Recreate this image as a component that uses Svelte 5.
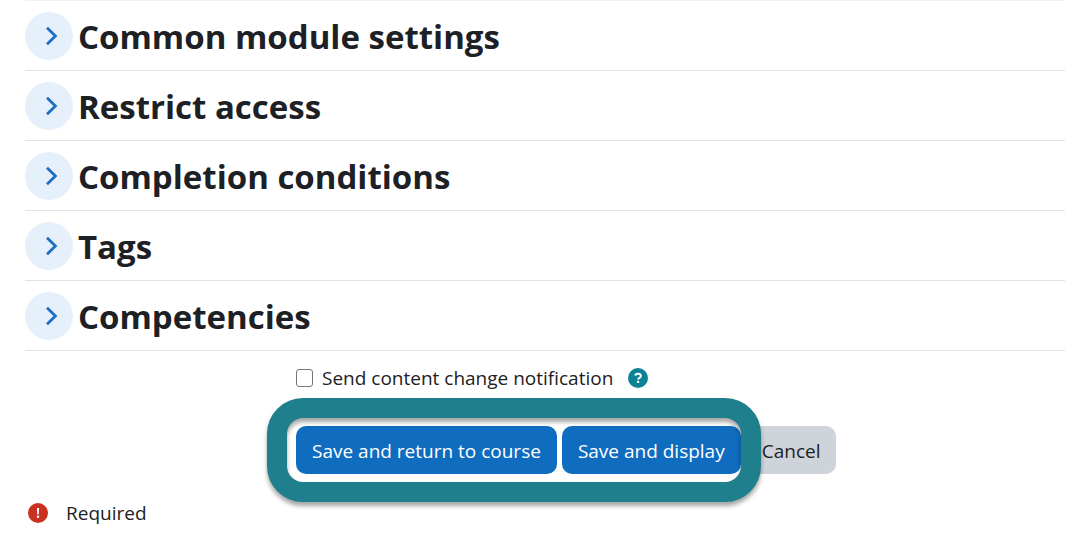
<script lang="ts">
  interface Section {
    id: string;
    title: string;
  }

  const sections: Section[] = [
    { id: 'common', title: 'Common module settings' },
    { id: 'restrict', title: 'Restrict access' },
    { id: 'completion', title: 'Completion conditions' },
    { id: 'tags', title: 'Tags' },
    { id: 'competencies', title: 'Competencies' },
  ];

  let notify = $state(false);
</script>

<form class="settings" onsubmit={(e) => e.preventDefault()}>
  <div class="sections">
    {#each sections as section (section.id)}
      <div class="section">
        <button type="button" class="toggle" aria-expanded="false" aria-labelledby={section.id}>
          <svg width="14" height="20" viewBox="0 0 14 20" aria-hidden="true">
            <path d="M2 1.8 L10.4 10 L2 18.2" />
          </svg>
        </button>
        <h3 id={section.id}>{section.title}</h3>
      </div>
    {/each}
  </div>

  <div class="notify">
    <input type="checkbox" id="notify" bind:checked={notify} />
    <label for="notify">Send content change notification</label>
    <button type="button" class="help" aria-label="Help">
      <svg width="20" height="20" viewBox="0 0 20 20" aria-hidden="true">
        <circle cx="10" cy="10" r="10" fill="#0b8295" />
        <path d="M7.3 7.7 C7.5 5.2 12.8 5.1 12.8 8 C12.8 9.9 10.1 9.7 10.1 11.6" fill="none" stroke="#fff" stroke-width="2" />
        <rect x="9" y="12.8" width="2.2" height="2.2" fill="#fff" />
      </svg>
    </button>
  </div>

  <div class="actions">
    <div class="highlighted">
      <button type="submit" class="btn primary">Save and return to course</button>
      <button type="submit" class="btn primary">Save and display</button>
    </div>
    <button type="button" class="btn cancel">Cancel</button>
  </div>

  <div class="required">
    <svg width="20" height="20" viewBox="0 0 20 20" aria-hidden="true">
      <circle cx="10" cy="10" r="10" fill="#ca3120" />
      <path d="M8.9 5 H11.1 L10.8 11.2 H9.2 Z" fill="#fff" />
      <circle cx="10" cy="13.8" r="1.3" fill="#fff" />
    </svg>
    <span>Required</span>
  </div>
</form>

<style>
  :global(body) {
    margin: 0;
    background: #fff;
  }

  .settings {
    padding: 0 16px 0 25px;
    font-family: 'Open Sans', 'Noto Sans', sans-serif;
    font-size: 19px;
    line-height: 28px;
    color: #1d2125;
  }

  .sections {
    border-top: 1px solid #f0f1f3;
  }

  .section {
    display: flex;
    align-items: center;
    gap: 5px;
    box-sizing: border-box;
    height: 70px;
    border-bottom: 1px solid #e0e3e6;
  }

  .toggle {
    display: flex;
    align-items: center;
    justify-content: center;
    width: 48px;
    height: 48px;
    padding: 0 0 0 6px;
    border: 0;
    border-radius: 50%;
    background: #e6f0fa;
    cursor: pointer;
  }

  .toggle path {
    fill: none;
    stroke: #1c6fc4;
    stroke-width: 2.8;
  }

  h3 {
    margin: 0;
    padding-top: 2px;
    font-size: 33px;
    font-weight: 700;
    line-height: 40px;
  }

  .notify {
    display: flex;
    align-items: center;
    margin: 13px 0 0 271px;
  }

  .notify input {
    appearance: none;
    box-sizing: border-box;
    width: 17px;
    height: 18px;
    margin: 0 9px 0 0;
    border: 1px solid #767676;
    border-radius: 3px;
    background: #fff;
  }

  .notify input:checked {
    background: #0f6cbf;
  }

  .help {
    display: flex;
    margin-left: 15px;
    padding: 0;
    border: 0;
    background: none;
    cursor: pointer;
  }

  .actions {
    display: flex;
    gap: 5px;
    margin: 34px 0 0 271px;
  }

  .highlighted {
    position: relative;
    display: flex;
    gap: 5px;
  }

  .highlighted::after {
    content: '';
    position: absolute;
    inset: -28px -20px -28px -29px;
    border: 20px solid #207f8d;
    border-radius: 36px;
    filter: drop-shadow(0 4px 2px rgba(0, 0, 0, 0.35));
    pointer-events: none;
  }

  .btn {
    height: 48px;
    padding: 2px 16px 0;
    border: 0;
    border-radius: 10px;
    font: inherit;
    white-space: nowrap;
    cursor: pointer;
  }

  .primary {
    background: #0f6cbf;
    color: #fff;
  }

  .cancel {
    background: #ced4da;
    color: #1d2125;
  }

  .required {
    display: flex;
    align-items: center;
    gap: 18px;
    margin-top: 25px;
    padding-left: 3px;
  }
</style>
